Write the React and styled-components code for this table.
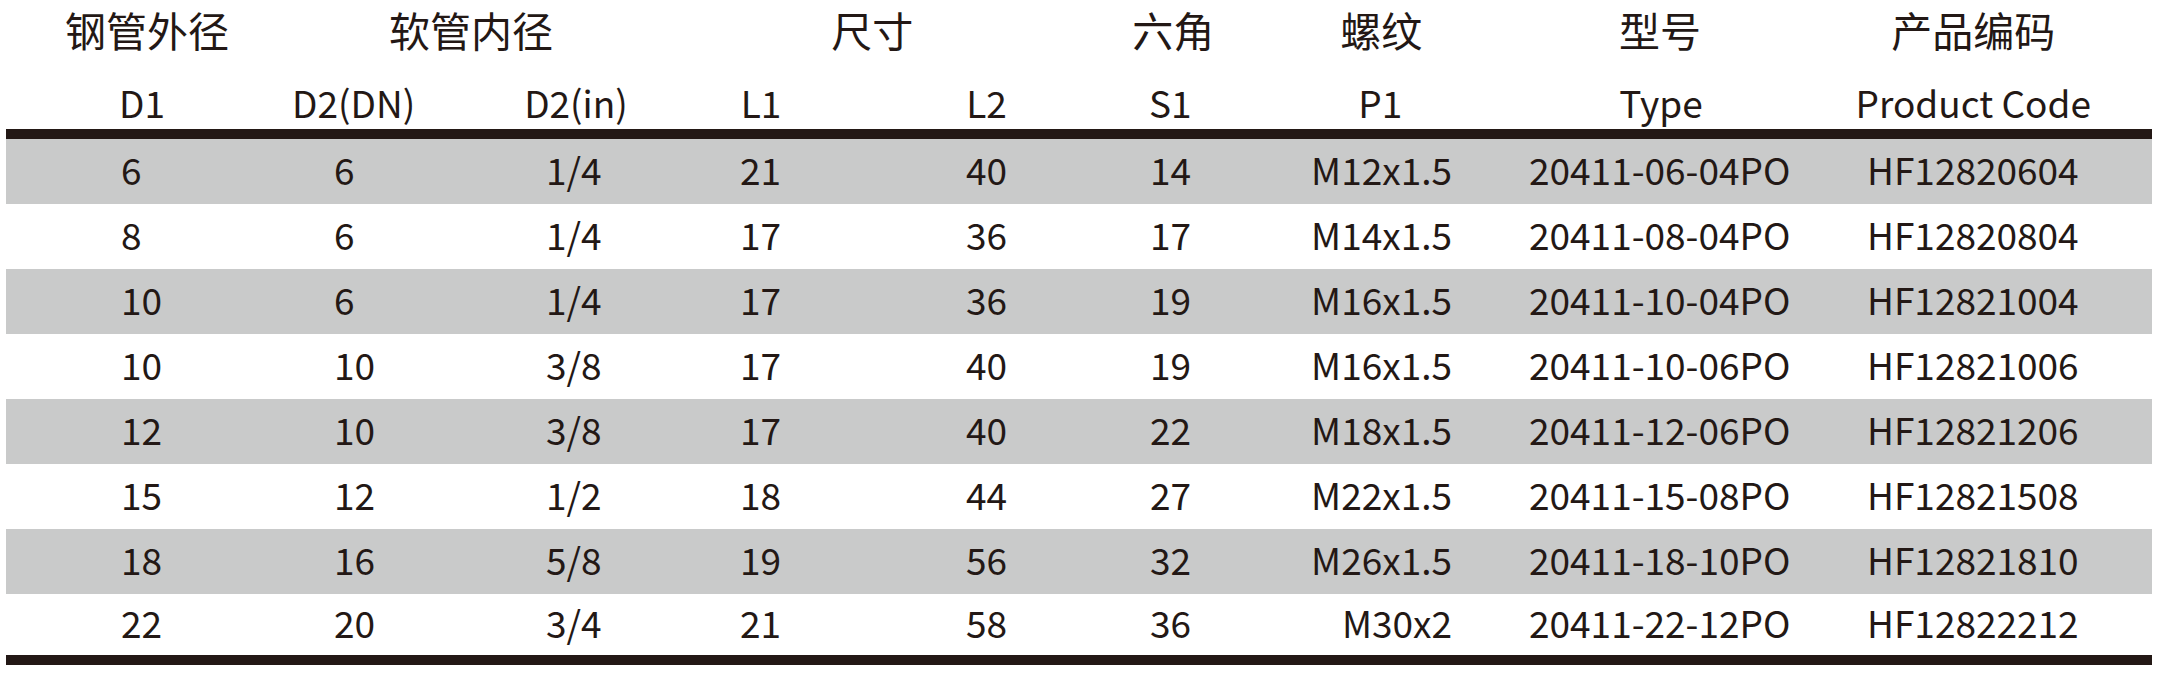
import React from 'react';
import styled, { createGlobalStyle } from 'styled-components';

const ink = '#231815';
const band = '#c9caca';

const GlobalStyle = createGlobalStyle`
    body {
        margin: 0;
        background: #fff;
        font-family: "Noto Sans CJK SC", "Noto Sans", sans-serif;
        color: ${ink};
    }
`;

// w = track width, hs = header shift, dl / dr = data inset from left / right
const columns = [
    { w: 241, head: 'D1', hs: 15.5, dl: 115 },
    { w: 218, head: 'D2(DN)', hs: -2.4, dl: 87 },
    { w: 204, head: 'D2(in)', hs: 9, dl: 81 },
    { w: 203.5, head: 'L1', hs: -9.75, dl: 71 },
    { w: 205, head: 'L2', hs: 11.6, dl: 93.5 },
    { w: 197.5, head: 'S1', hs: -6, dl: 72.5 },
    { w: 244.5, head: 'P1', hs: -17, dr: 67.5 },
    { w: 295, head: 'Type', hs: -6, dl: 9.5 },
    { w: 337.5, head: 'Product Code', hs: -10, dl: 52.5 },
];

const groups = [
    { span: 1, text: '钢管外径', hs: 20.5 },
    { span: 2, text: '软管内径', hs: 13 },
    { span: 2, text: '尺寸', hs: -1 },
    { span: 1, text: '六角', hs: -3 },
    { span: 1, text: '螺纹', hs: -16 },
    { span: 1, text: '型号', hs: -7 },
    { span: 1, text: '产品编码', hs: -10 },
];

const rows = [
    ['6', '6', '1/4', '21', '40', '14', 'M12x1.5', '20411-06-04PO', 'HF12820604'],
    ['8', '6', '1/4', '17', '36', '17', 'M14x1.5', '20411-08-04PO', 'HF12820804'],
    ['10', '6', '1/4', '17', '36', '19', 'M16x1.5', '20411-10-04PO', 'HF12821004'],
    ['10', '10', '3/8', '17', '40', '19', 'M16x1.5', '20411-10-06PO', 'HF12821006'],
    ['12', '10', '3/8', '17', '40', '22', 'M18x1.5', '20411-12-06PO', 'HF12821206'],
    ['15', '12', '1/2', '18', '44', '27', 'M22x1.5', '20411-15-08PO', 'HF12821508'],
    ['18', '16', '5/8', '19', '56', '32', 'M26x1.5', '20411-18-10PO', 'HF12821810'],
    ['22', '20', '3/4', '21', '58', '36', 'M30x2', '20411-22-12PO', 'HF12822212'],
];

const tracks = columns.map((c) => `${c.w}px`).join(' ');

const Page = styled.div`
    padding: 0 6px;
    width: 2146px;
`;

const Grid = styled.div`
    display: grid;
    grid-template-columns: ${tracks};
    white-space: nowrap;
`;

const TitleRow = styled(Grid)`
    height: 58px;
    align-items: center;
`;

const UnitRow = styled(Grid)`
    height: 71px;
    padding-top: 26px;
    box-sizing: border-box;
    align-items: start;
`;

const Body = styled.div`
    border-top: 10px solid ${ink};
    border-bottom: 10px solid ${ink};
    height: 516px;
`;

const DataRow = styled(Grid)`
    height: 65px;
    align-items: center;
    background: ${(p) => (p.$shaded ? band : 'transparent')};

    &:last-child {
        height: 61px;
    }
`;

const Title = styled.div`
    grid-column: span ${(p) => p.$span};
    font-size: 41px;
    line-height: 1;
    text-align: center;
    padding-left: ${(p) => Math.max(0, p.$shift * 2)}px;
    padding-right: ${(p) => Math.max(0, -p.$shift * 2)}px;
`;

const Unit = styled.div`
    font-size: 37px;
    line-height: 37px;
    text-align: center;
    padding-left: ${(p) => Math.max(0, p.$shift * 2)}px;
    padding-right: ${(p) => Math.max(0, -p.$shift * 2)}px;
`;

const Cell = styled.div`
    font-size: 37px;
    line-height: 1;
    padding-bottom: 4px;
    text-align: ${(p) => (p.$right != null ? 'right' : 'left')};
    padding-left: ${(p) => p.$left || 0}px;
    padding-right: ${(p) => p.$right || 0}px;
`;

const App = () => (
    <>
        <GlobalStyle />
        <Page>
            <TitleRow>
                {groups.map((g) => (
                    <Title key={g.text} $span={g.span} $shift={g.hs}>
                        {g.text}
                    </Title>
                ))}
            </TitleRow>
            <UnitRow>
                {columns.map((c) => (
                    <Unit key={c.head} $shift={c.hs}>
                        {c.head}
                    </Unit>
                ))}
            </UnitRow>
            <Body>
                {rows.map((r, i) => (
                    <DataRow key={r[8]} $shaded={i % 2 === 0}>
                        {r.map((v, j) => (
                            <Cell key={j} $left={columns[j].dl} $right={columns[j].dr}>
                                {v}
                            </Cell>
                        ))}
                    </DataRow>
                ))}
            </Body>
        </Page>
    </>
);

export default App;
